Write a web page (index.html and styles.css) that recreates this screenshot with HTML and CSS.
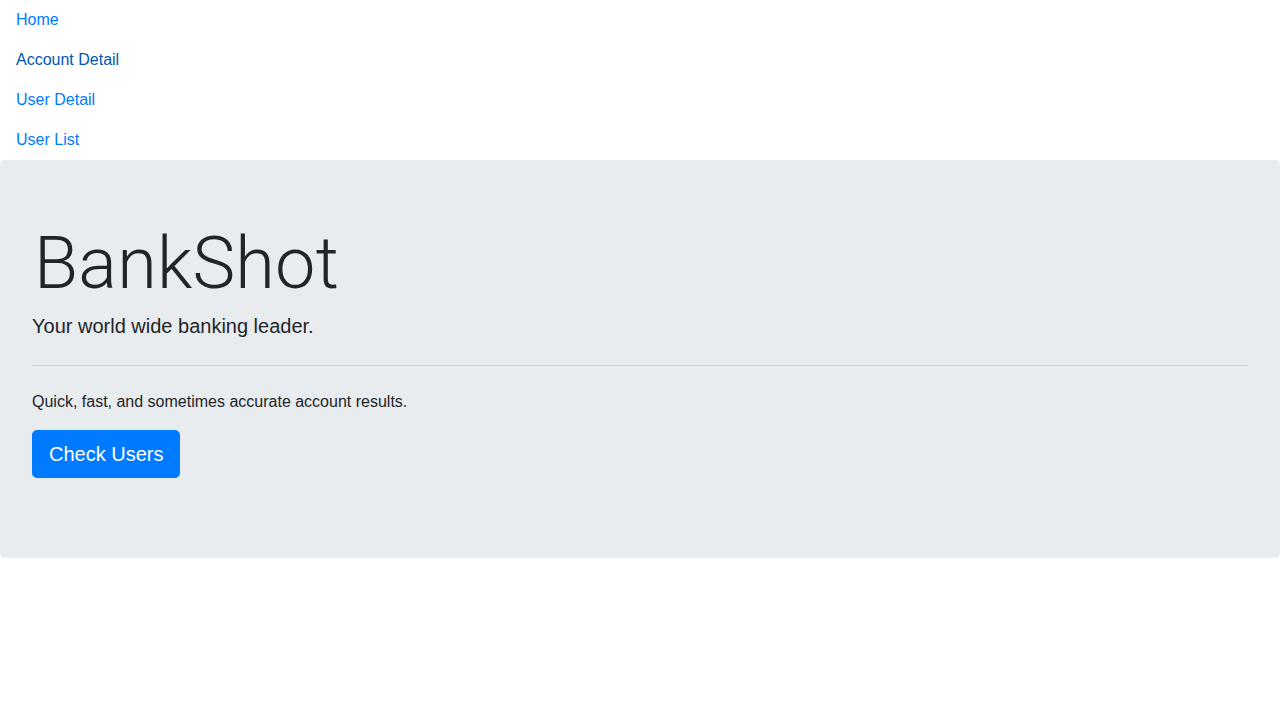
FILE: index.html
```html
<!DOCTYPE html>
<html lang="en">
<head>
<meta charset="utf-8">
<title>BankShot</title>
<link rel="stylesheet" href="styles.css">
</head>
<body>
  <ul class="nav">
    <li><a class="nav-link" href="#">Home</a></li>
    <li><a class="nav-link active" href="#">Account Detail</a></li>
    <li><a class="nav-link" href="#">User Detail</a></li>
    <li><a class="nav-link" href="#">User List</a></li>
  </ul>
  <div class="jumbotron">
    <h1 class="display">BankShot</h1>
    <p class="lead">Your world wide banking leader.</p>
    <hr class="divider">
    <p class="text">Quick, fast, and sometimes accurate account results.</p>
    <p class="lead action"><a class="btn" href="#">Check Users</a></p>
  </div>
</body>
</html>
```

FILE: styles.css
```css
* { box-sizing: border-box; }
html, body {
  margin: 0;
  padding: 0;
  background: #fff;
}
body {
  font-family: "Liberation Sans", Arial, sans-serif;
  font-size: 16px;
  line-height: 1.5;
  color: #212529;
}
.nav {
  list-style: none;
  margin: 0;
  padding: 0;
  display: flex;
  flex-direction: column;
}
.nav-link {
  display: block;
  padding: 8px 16px;
  color: #007bff;
  text-decoration: none;
}
.nav-link.active { color: #0056b3; }
.jumbotron {
  background: #e9ecef;
  border-radius: 4.8px;
  padding: 64px 32px;
}
.display {
  margin: 0 0 8px;
  padding-left: 2px;
  font-family: Roboto, "Liberation Sans", sans-serif;
  font-size: 72px;
  font-weight: 300;
  line-height: 1.1;
  letter-spacing: 0.2px;
  color: #212529;
}
.lead {
  margin: 0 0 16px;
  font-family: "Liberation Sans", Arial, sans-serif;
  font-size: 20px;
  font-weight: 400;
  line-height: 30px;
}
.divider {
  margin: 24px 0;
  border: 0;
  border-top: 1px solid rgba(0,0,0,0.1);
  height: 0;
}
.text {
  margin: 0 0 16px;
}
.action {
  height: 48px;
  padding-top: 0;
}
.btn {
  display: inline-block;
  padding: 8px 16px;
  font-family: "Liberation Sans", Arial, sans-serif;
  font-size: 20px;
  font-weight: 400;
  line-height: 30px;
  color: #fff;
  background: #007bff;
  border: 1px solid #007bff;
  border-radius: 4.8px;
  text-decoration: none;
  vertical-align: top;
}
```
